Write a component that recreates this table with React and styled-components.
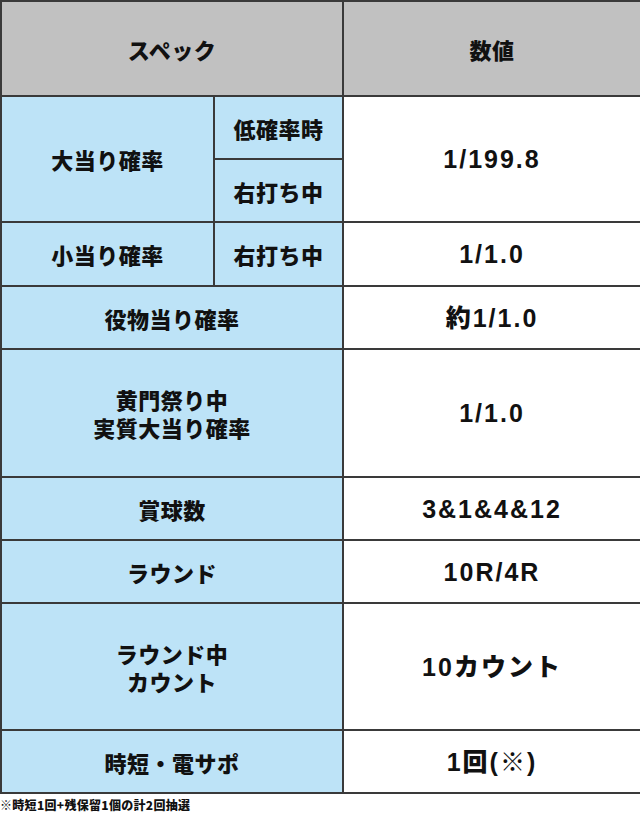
import React from 'react';
import styled, { createGlobalStyle } from 'styled-components';

const GlobalStyle = createGlobalStyle`
  body {
    margin: 0;
    background: #fff;
    font-family: "Noto Sans CJK JP", "Liberation Sans", sans-serif;
  }
`;

const Wrap = styled.div`
  width: 640px;
`;

const Table = styled.table`
  width: 640px;
  border-collapse: collapse;
  table-layout: fixed;
`;

const Row = styled.tr`
  height: ${p => p.h}px;
`;

const Cell = styled.td`
  border: 2px solid #3a3a3a;
  background: ${p => (p.kind === 'head' ? '#c1c1c1' : p.kind === 'label' ? '#bde3f7' : '#ffffff')};
  text-align: center;
  vertical-align: middle;
  padding: 0;
  color: #111;
  font-family: ${p => (p.num ? '"Liberation Sans", "Noto Sans CJK JP", sans-serif' : '"Noto Sans CJK JP", sans-serif')};
  font-weight: 900;
  font-size: ${p => (p.num ? 25 : 22)}px;
  letter-spacing: ${p => (p.num ? 2 : 0.5)}px;
  line-height: 28px;
`;

const Note = styled.div`
  font-family: "Noto Sans CJK JP", sans-serif;
  font-weight: 900;
  font-size: 12px;
  letter-spacing: 0.3px;
  color: #111;
  padding: 4px 0 0 0;
  line-height: 1.2;
`;

export default function App() {
  return (
    <Wrap>
      <GlobalStyle />
      <Table>
        <colgroup>
          <col style={{ width: 213 }} />
          <col style={{ width: 129 }} />
          <col style={{ width: 298 }} />
        </colgroup>
        <tbody>
          <Row h={95}>
            <Cell kind="head" colSpan={2}>スペック</Cell>
            <Cell kind="head">数値</Cell>
          </Row>
          <Row h={63}>
            <Cell kind="label" rowSpan={2}>大当り確率</Cell>
            <Cell kind="label">低確率時</Cell>
            <Cell rowSpan={2} num>1/199.8</Cell>
          </Row>
          <Row h={63}>
            <Cell kind="label">右打ち中</Cell>
          </Row>
          <Row h={64}>
            <Cell kind="label">小当り確率</Cell>
            <Cell kind="label">右打ち中</Cell>
            <Cell num>1/1.0</Cell>
          </Row>
          <Row h={63}>
            <Cell kind="label" colSpan={2}>役物当り確率</Cell>
            <Cell num>約1/1.0</Cell>
          </Row>
          <Row h={128}>
            <Cell kind="label" colSpan={2}>黄門祭り中<br />実質大当り確率</Cell>
            <Cell num>1/1.0</Cell>
          </Row>
          <Row h={63}>
            <Cell kind="label" colSpan={2}>賞球数</Cell>
            <Cell num>3&amp;1&amp;4&amp;12</Cell>
          </Row>
          <Row h={63}>
            <Cell kind="label" colSpan={2}>ラウンド</Cell>
            <Cell num>10R/4R</Cell>
          </Row>
          <Row h={127}>
            <Cell kind="label" colSpan={2}>ラウンド中<br />カウント</Cell>
            <Cell num>10カウント</Cell>
          </Row>
          <Row h={63}>
            <Cell kind="label" colSpan={2}>時短・電サポ</Cell>
            <Cell num>1回(※)</Cell>
          </Row>
        </tbody>
      </Table>
      <Note>※時短1回+残保留1個の計2回抽選</Note>
    </Wrap>
  );
}
